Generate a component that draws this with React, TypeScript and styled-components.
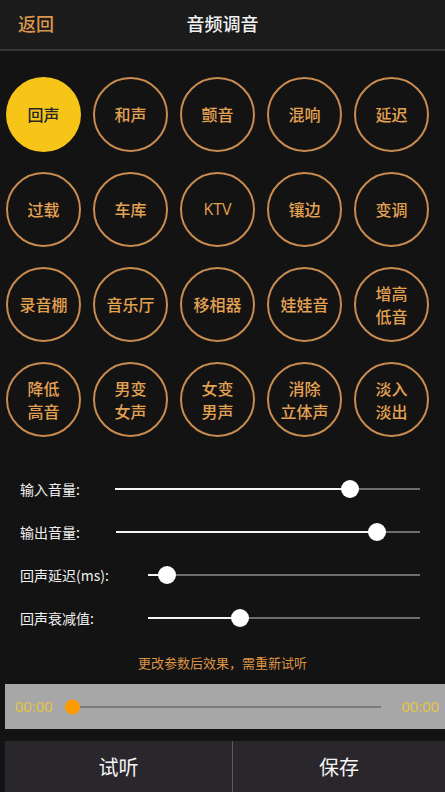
import styled, { createGlobalStyle } from 'styled-components';

const GlobalStyle = createGlobalStyle`
  html, body {
    margin: 0;
    padding: 0;
    background: #131313;
  }
  * {
    box-sizing: border-box;
  }
  body {
    font-family: "Noto Sans CJK SC", "Noto Sans", sans-serif;
  }
`;

const effects = [
  ['回声'],
  ['和声'],
  ['颤音'],
  ['混响'],
  ['延迟'],
  ['过载'],
  ['车库'],
  ['KTV'],
  ['镶边'],
  ['变调'],
  ['录音棚'],
  ['音乐厅'],
  ['移相器'],
  ['娃娃音'],
  ['增高', '低音'],
  ['降低', '高音'],
  ['男变', '女声'],
  ['女变', '男声'],
  ['消除', '立体声'],
  ['淡入', '淡出'],
];

const sliders = [
  { label: '输入音量:', labelWidth: 115, value: 77 },
  { label: '输出音量:', labelWidth: 116, value: 86 },
  { label: '回声延迟(ms):', labelWidth: 148, value: 7 },
  { label: '回声衰减值:', labelWidth: 148, value: 34 },
];

function App() {
  return (
    <>
      <GlobalStyle />
      <StPage>
        <StHeader>
          <StBack>返回</StBack>
          <StTitle>音频调音</StTitle>
          <span />
        </StHeader>

        <StEffectGrid>
          {effects.map(([first, second], i) => (
            <StEffect key={first + (second ?? '')} $active={i === 0} $latin={first === 'KTV'}>
              {first}
              {second && (
                <>
                  <br />
                  {second}
                </>
              )}
            </StEffect>
          ))}
        </StEffectGrid>

        <StSliders>
          {sliders.map((s) => (
            <StSliderRow key={s.label}>
              <StSliderLabel $width={s.labelWidth}>{s.label}</StSliderLabel>
              <StTrack>
                <StTrackFill style={{ width: `${s.value}%` }} />
                <StThumb style={{ left: `${s.value}%` }} />
              </StTrack>
            </StSliderRow>
          ))}
        </StSliders>

        <StNote>更改参数后效果，需重新试听</StNote>

        <StPlayer>
          <StTime>00:00</StTime>
          <StProgress>
            <StProgressDot />
          </StProgress>
          <StTime>00:00</StTime>
        </StPlayer>

        <StActions>
          <StActionButton>试听</StActionButton>
          <StActionButton>保存</StActionButton>
        </StActions>
      </StPage>
    </>
  );
}

export default App;

const StPage = styled.main`
  display: flex;
  flex-direction: column;

  width: 445px;
  height: 792px;

  background: #131313;
  overflow: hidden;
`;

const StHeader = styled.header`
  display: grid;
  grid-template-columns: 1fr auto 1fr;
  align-items: center;

  height: 52px;
  padding: 0 18px 4px 18px;

  background: #1b1b1b;
  border-bottom: 2px solid #353535;
`;

const StBack = styled.span`
  color: #d9974c;
  font-weight: 500;
  font-size: 18px;
`;

const StTitle = styled.h1`
  margin: 0;

  color: #f2f2f2;
  font-weight: 500;
  font-size: 18px;
`;

const StEffectGrid = styled.section`
  display: grid;
  grid-template-columns: repeat(5, 75px);
  column-gap: 12px;
  row-gap: 20px;

  padding: 26px 0 0 6px;
`;

const StEffect = styled.button<{ $active: boolean; $latin: boolean }>`
  display: flex;
  flex-direction: column;
  justify-content: center;
  align-items: center;

  width: 75px;
  height: 75px;
  padding: 0;

  border: ${(p) => (p.$active ? 'none' : '2px solid #c98b4f')};
  border-radius: 50%;
  background: ${(p) => (p.$active ? '#f7c518' : 'transparent')};
  color: ${(p) => (p.$active ? '#262626' : '#e3a152')};
  font-family: ${(p) =>
    p.$latin ? '"Open Sans", sans-serif' : '"Noto Sans CJK SC", sans-serif'};
  font-weight: 500;
  font-size: 16px;
  line-height: 23px;
  text-align: center;
`;

const StSliders = styled.section`
  display: flex;
  flex-direction: column;

  padding: 30px 25px 0 20px;
`;

const StSliderRow = styled.div`
  display: flex;
  align-items: center;

  height: 43px;
`;

const StSliderLabel = styled.span<{ $width: number }>`
  flex: 0 0 ${(p) => p.$width - 20}px;

  color: #f0f0f0;
  font-size: 14px;
`;

const StTrack = styled.div`
  position: relative;
  flex: 1;

  height: 2px;

  background: #6d6d6d;
`;

const StTrackFill = styled.div`
  height: 100%;

  background: #f4f4f4;
`;

const StThumb = styled.span`
  position: absolute;
  top: 50%;

  width: 18px;
  height: 18px;

  border-radius: 50%;
  background: #ffffff;
  transform: translate(-50%, -50%);
`;

const StNote = styled.p`
  margin: 14px 0 0 0;

  color: #dc9446;
  font-size: 13px;
  text-align: center;
`;

const StPlayer = styled.section`
  display: flex;
  align-items: center;
  gap: 12px;

  height: 45px;
  margin: 12px 0 0 5px;
  padding: 0 6px 0 10px;

  background: #a7a7a7;
`;

const StTime = styled.span`
  color: #e5c444;
  font-family: "Liberation Sans", Arial, sans-serif;
  font-size: 15px;
`;

const StProgress = styled.div`
  position: relative;
  flex: 1;

  height: 2px;
  margin-right: 8px;

  background: #7c7c7c;
`;

const StProgressDot = styled.span`
  position: absolute;
  top: 50%;
  left: 0;

  width: 15px;
  height: 15px;

  border-radius: 50%;
  background: #ff9b00;
  transform: translateY(-50%);
`;

const StActions = styled.nav`
  display: grid;
  grid-template-columns: 228px 1fr;

  height: 52px;
  margin: 12px 0 0 5px;

  background: #29272c;

  & > button:first-of-type {
    border-right: 1px solid #5a5a5a;
  }
`;

const StActionButton = styled.button`
  display: flex;
  justify-content: center;
  align-items: center;

  padding: 0;

  border: none;
  background: transparent;
  color: #f4f4f4;
  font-family: "Noto Sans CJK SC", sans-serif;
  font-size: 20px;
`;
